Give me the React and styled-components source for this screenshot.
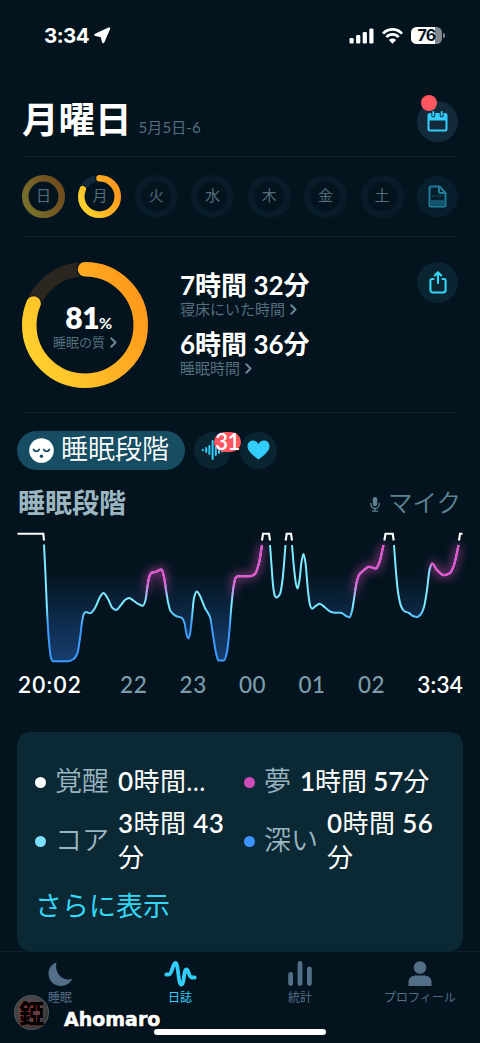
import React from 'react';
import styled, { createGlobalStyle } from 'styled-components'

const GlobalStyle = createGlobalStyle`
* { box-sizing: border-box; }
body {
margin: 0;
background: #03141e;
font-family: Lato, "Noto Sans CJK JP", sans-serif;
color: white;
}
`

const Screen = styled.div`
position: relative;
display: flex;
flex-direction: column;
width: 480px;
height: 1043px;
overflow: hidden;
background: #03141e;
`

const StatusBar = styled.div`
display: flex;
justify-content: space-between;
align-items: center;
height: 72px;
padding: 0 35px 0 44px;
`

const Clock = styled.div`
display: flex;
align-items: center;
gap: 5px;
font: 700 20.5px/24px Inter, sans-serif;
letter-spacing: -0.5px;
`

const StatusIcons = styled.div`
display: flex;
align-items: center;
gap: 8px;
height: 24px;
`

const Battery = styled.div`
display: flex;
align-items: center;
gap: 1px;
`

const BatteryBody = styled.div`
width: 31px;
height: 17px;
border-radius: 5.5px;
background: linear-gradient(90deg, white 78%, #81888d 78%);
color: #03141e;
font: 700 16px/17px Inter, sans-serif;
letter-spacing: -0.6px;
text-align: center;
`

const BatteryTip = styled.div`
width: 2px;
height: 5px;
border-radius: 0 2px 2px 0;
background: #81888d;
`

const Header = styled.header`
display: flex;
justify-content: space-between;
height: 84px;
margin: 0 22px;
padding-top: 29px;
`

const TitleGroup = styled.div`
display: flex;
align-items: baseline;
gap: 7px;
height: 41px;
`

const Title = styled.h1`
margin: 0;
font-size: 36.5px;
font-weight: 700;
line-height: 36px;
`

const DateText = styled.span`
color: #536d7d;
font-size: 15px;
font-weight: 400;
letter-spacing: 0.1px;
`

const RoundButton = styled.div`
position: relative;
display: flex;
align-items: center;
justify-content: center;
flex: none;
width: ${({size}) => size || 41}px;
height: ${({size}) => size || 41}px;
border-radius: 50%;
background: ${({bg}) => bg || '#0b2431'};
`

const RedDot = styled.div`
position: absolute;
top: -6px;
left: 4px;
width: 16px;
height: 16px;
border-radius: 50%;
background: #ff5660;
`

const Week = styled.div`
display: flex;
align-items: center;
justify-content: space-between;
height: 80px;
margin: 0 22px;
border-top: 1px solid #0c222d;
`

const Day = styled.div`
display: grid;
place-items: center;
width: 43px;
height: 43px;
color: #536d7d;
font-size: 15px;
line-height: 20px;
> * { grid-area: 1 / 1; }
span { margin-top: -2px; }
`

const Summary = styled.section`
display: flex;
height: 178px;
margin: 0 22px;
padding-top: 25px;
border-top: 1px solid #0c222d;
border-bottom: 1px solid #0c222d;
`

const Score = styled.div`
display: grid;
place-items: center;
width: 126px;
height: 126px;
> * { grid-area: 1 / 1; }
`

const ScoreText = styled.div`
display: flex;
flex-direction: column;
align-items: center;
padding-top: 8px;
`

const ScoreValue = styled.div`
padding-left: 7px;
font-size: 30px;
font-weight: 800;
line-height: 22px;
letter-spacing: -0.5px;
small { font-size: 16px; font-weight: 700; }
`

const Hint = styled.div`
display: flex;
align-items: center;
gap: 5px;
color: #536d7d;
font-size: ${({size}) => size || 15}px;
line-height: 17px;
`

const Times = styled.div`
display: flex;
flex-direction: column;
flex: 1;
padding: 7px 0 0 32px;
`

const TimeValue = styled.div`
font-size: 26px;
font-weight: 700;
line-height: 32px;
`

const TimeBlock = styled.div`
height: 59px;
`

const Chips = styled.div`
display: flex;
align-items: center;
gap: 9px;
height: 40px;
margin: 17px 17px 0;
`

const ActiveChip = styled.div`
display: flex;
align-items: center;
gap: 7px;
width: 168px;
height: 39px;
padding-left: 12px;
border-radius: 20px;
background: #164d62;
font-size: 27px;
font-weight: 350;
line-height: 36px;
white-space: nowrap;
span { margin-top: -3px; }
`

const CountBadge = styled.div`
position: absolute;
top: 0;
left: 20px;
width: 27px;
height: 20px;
border-radius: 11px;
background: #ff5660;
font-size: 22px;
font-weight: 600;
line-height: 19px;
text-align: center;
letter-spacing: -0.5px;
`

const ChartHead = styled.div`
display: flex;
justify-content: space-between;
align-items: center;
height: 40px;
margin: 13px 19px 0 18px;
`

const ChartTitle = styled.h2`
margin: 0;
color: #9bb5c1;
font-size: 27px;
font-weight: 600;
line-height: 36px;
`

const Mic = styled.div`
display: flex;
align-items: center;
gap: 8px;
color: #5f8291;
font-size: 24.5px;
font-weight: 350;
line-height: 36px;
svg { margin-top: 2px; }
`

const Plot = styled.svg`
display: block;
flex: none;
width: 480px;
height: 149px;
margin-top: -1px;
`

const Axis = styled.div`
display: flex;
justify-content: space-between;
height: 30px;
margin: -1px 17px 1px 18px;
color: #7c9cab;
font-size: 22.5px;
font-weight: 500;
letter-spacing: 0.6px;
line-height: 30px;
b { color: white; font-weight: 600; }
b:first-child { margin-right: 6px; letter-spacing: 1.2px; }
b:last-child { letter-spacing: 0.2px; }
`

const Card = styled.section`
flex: none;
height: 219px;
margin: 31px 17px 0;
padding: 30px 18px 0;
border-radius: 13px;
background: #0b2935;
`

const Stages = styled.div`
display: grid;
grid-template-columns: 209px 209px;
grid-template-rows: 37px 72px;
row-gap: 5px;
`

const Stage = styled.div`
display: flex;
align-items: center;
gap: 9px;
font-size: 26px;
line-height: 34px;
`

const Dot = styled.i`
flex: none;
width: 11px;
height: 11px;
margin-top: 3px;
border-radius: 50%;
background: ${({color}) => color};
`

const StageName = styled.span`
flex: none;
color: #9bb5c1;
font-size: 27px;
font-weight: 350;
`

const StageTime = styled.span`
letter-spacing: ${({tight}) => (tight ? '-0.1px' : '0.4px')};
white-space: pre;
b { font-weight: 600; }
`

const More = styled.a`
display: block;
margin-top: 12px;
color: #33d6f5;
font-size: 27px;
font-weight: 400;
line-height: 36px;
`

const TabBar = styled.nav`
display: grid;
grid-template-columns: repeat(4, 1fr);
height: 92px;
border-top: 1px solid #0c222d;
`

const Tab = styled.div`
display: flex;
flex-direction: column;
align-items: center;
padding-top: 8px;
color: ${({active}) => (active ? '#33cdfb' : '#536f88')};
font-size: 12px;
line-height: 20px;
svg { display: block; }
`

const Watermark = styled.div`
position: absolute;
left: 14px;
top: 994px;
display: flex;
align-items: center;
gap: 15px;
height: 36px;
font: 900 19px/24px "DejaVu Sans", sans-serif;
text-shadow: 1px 1px 2px black;
> span { margin-top: 14px; -webkit-text-stroke: 0.5px white; }
`

const Avatar = styled.div`
display: flex;
align-items: center;
justify-content: center;
width: 35px;
height: 35px;
border-radius: 50%;
border: 1px solid #5a5c5d;
background: radial-gradient(circle at 45% 45%, #7a2a30 0%, #4b4b4b 45%, #303030 75%, #777 100%);
color: black;
font: 900 25px/33px "Noto Sans CJK JP", sans-serif;
text-shadow: 0 0 1px #e0303c;
`

const HomeBar = styled.div`
position: absolute;
left: 154px;
bottom: 8px;
width: 172px;
height: 6px;
border-radius: 3px;
background: white;
`

const Ring = ({size, stroke, value, dim, track}) => {
const c = size / 2
const r = (size - stroke) / 2
const len = 2 * Math.PI * r
const angle = value * 2 * Math.PI
return (
<svg width={size} height={size}>
<defs>
<linearGradient id={'ring' + size + value} x1="0.2" y1="0" x2="0.7" y2="1">
<stop offset="0" stopColor={dim ? '#78702a' : '#ffd22e'} />
<stop offset="1" stopColor={dim ? '#704b1d' : '#ff991c'} />
</linearGradient>
</defs>
<circle cx={c} cy={c} r={r} fill="none" stroke={track} strokeWidth={stroke} />
{value > 0 && <>
<circle cx={c} cy={c - r} r={stroke / 2 + 1.3} fill="#03141e" />
<circle cx={c + r * Math.sin(angle)} cy={c - r * Math.cos(angle)} r={stroke / 2 + 1.3} fill="#03141e" />
<circle cx={c} cy={c} r={r} fill="none" stroke={`url(#ring${size}${value})`} strokeWidth={stroke}
strokeLinecap="round" strokeDasharray={`${len * value} ${len}`} transform={`rotate(-90 ${c} ${c})`} />
</>}
</svg>
)
}

const Chevron = () => (
<svg width="7" height="11" viewBox="0 0 7 11" fill="none" stroke="#6b8798" strokeWidth="2" strokeLinecap="round" strokeLinejoin="round">
<path d="M1.3 1.3 5.5 5.5 1.3 9.7" />
</svg>
)

// digits are set heavier than the units around them
const Duration = ({text, tight}) => (
<StageTime tight={tight}>{text.split(/(\d+)/).map((part, i) => i % 2 ? <b key={i}>{part}</b> : part)}</StageTime>
)

// sleep depth curve, one list of points per asleep stretch
const curves = [
[[44,544.5],[45.5,575],[47,610],[49,642],[51,658],[53,661.3],[68,661.3],[73,659.5],[77.5,653],[80,638],[82,622],[84,613.5],[86,612],[90,613.3],[95,608],[100,597],[103.5,593],[108,599],[112.5,608],[116,610],[121,605],[125,600],[129,598],[134,601],[138,603.8],[143,605.8],[145.5,600],[147.5,586],[149.5,576],[151.5,572.8],[156,571.8],[161.5,569.5],[164,577],[166,590],[168,602],[170.5,611],[176,616],[182,618],[184.5,623],[186.5,634],[188.3,638.5],[190,634],[192,617],[194,598],[196.7,591.5],[199.5,595],[205,608],[210,617],[213,635],[216,653],[218.5,660.5],[224,660.5],[227,652],[229.5,630],[231.5,605],[233.5,587],[235.5,578],[238,576.3],[250,576.3],[255,574],[259,563],[262,545]],
[[270,545],[271.5,565],[273,585],[274.5,595],[276.5,597.5],[280,594],[282.5,580],[285.5,545]],
[[292,545],[294,568],[296,584],[297.5,588.5],[299.5,580],[301.5,562],[303.5,554],[305.5,563],[308,591],[310,605],[312,608.7],[315,606.5],[319.7,603.7],[325,607.5],[330,611.5],[335,612.8],[341,612.8],[346,616],[349.5,617.5],[352,611],[354,599],[356.5,583],[359,575],[363,571],[369,566.8],[376,568.5],[379.5,562],[383.5,545]],
[[394,545],[396,572],[398,592],[401,606],[404,611],[409,613],[413,616],[417,617],[421,614],[424,607],[427,590],[429.5,570],[432,563.5],[437,570],[444,575.3],[450,573],[454,565],[456.5,555],[458.5,545]],
]

const smooth = (pts) => {
const n = pts.length
const s = []
for (let i = 0; i < n - 1; i++) s.push((pts[i + 1][1] - pts[i][1]) / (pts[i + 1][0] - pts[i][0]))
const m = pts.map((p, i) => {
if (i === 0) return s[0]
if (i === n - 1) return s[n - 2]
if (s[i - 1] * s[i] <= 0) return 0
return 2 * s[i - 1] * s[i] / (s[i - 1] + s[i])
})
let d = `M${pts[0][0]},${pts[0][1]}`
for (let i = 0; i < n - 1; i++) {
const [x0, y0] = pts[i]
const [x1, y1] = pts[i + 1]
const h = (x1 - x0) / 3
d += `C${x0 + h},${y0 + m[i] * h} ${x1 - h},${y1 - m[i + 1] * h} ${x1},${y1}`
}
return d
}

const SleepChart = () => (
<Plot viewBox="0 522 480 149">
<defs>
<linearGradient id="line" gradientUnits="userSpaceOnUse" x1="0" y1="606" x2="0" y2="626">
<stop offset="0" stopColor="#7cebff" />
<stop offset="1" stopColor="#3d9bff" />
</linearGradient>
<linearGradient id="dream" gradientUnits="userSpaceOnUse" x1="0" y1="580" x2="0" y2="602">
<stop offset="0" stopColor="#f050ce" />
<stop offset="1" stopColor="#f050ce" stopOpacity="0" />
</linearGradient>
<linearGradient id="deep" gradientUnits="userSpaceOnUse" x1="0" y1="572" x2="0" y2="662">
<stop offset="0" stopColor="#1a4680" stopOpacity="0" />
<stop offset="1" stopColor="#1a4680" stopOpacity="0.85" />
</linearGradient>
<filter id="glow" filterUnits="userSpaceOnUse" x="130" y="520" width="350" height="110">
<feGaussianBlur stdDeviation="5" />
</filter>
<clipPath id="dreamTime">
<rect x="144" y="540" width="23.5" height="80" />
<rect x="228" y="540" width="36" height="80" />
<rect x="352" y="540" width="34" height="80" />
<rect x="430.5" y="540" width="30" height="40" />
</clipPath>
</defs>
{curves.map((pts, i) => <path key={i} d={smooth(pts) + 'Z'} fill="url(#deep)" />)}
<g filter="url(#glow)" opacity="0.55">
<g clipPath="url(#dreamTime)" fill="none" stroke="url(#dream)" strokeWidth="6">
{curves.map((pts, i) => <path key={i} d={smooth(pts)} />)}
</g>
</g>
<g fill="none" stroke="url(#line)" strokeWidth="2">
{curves.map((pts, i) => <path key={i} d={smooth(pts)} />)}
</g>
<g clipPath="url(#dreamTime)" fill="none" stroke="url(#dream)" strokeWidth="2.1">
{curves.map((pts, i) => <path key={i} d={smooth(pts)} />)}
</g>
<path d="M17.5 533.8H43.3L44 540.5M262 540.5 263 533.8H269L270 540.5M285.7 540.5 286.7 533.8H291L292 540.5M384.3 540.5 385.5 533.8H392.7L393.7 540.5M459 540.5 460 533.8H462.5" fill="none" stroke="white" strokeWidth="2.1" />
</Plot>
)

const days = [
['日', 0.975], ['月', 0.81], ['火', 0], ['水', 0], ['木', 0], ['金', 0], ['土', 0],
]

const App = () => {

    return(
<Screen>
<GlobalStyle />
<StatusBar>
<Clock>3:34
<svg width="17" height="17" viewBox="0 0 17 17"><path d="M1.5 7.800 15 1.500 9.200 15 7.700 9.200Z" fill="white" stroke="white" strokeWidth="2.400" strokeLinejoin="round" /></svg>
</Clock>
<StatusIcons>
<svg width="25" height="16" viewBox="-0.5 0 25 16" fill="white">
<rect x="0" y="10" width="4.200" height="5.600" rx="1.300" /><rect x="6.600" y="7" width="4.200" height="8.600" rx="1.300" /><rect x="13.200" y="4" width="4.200" height="11.600" rx="1.300" /><rect x="19.800" y="0.500" width="4.200" height="15.100" rx="1.300" />
</svg>
<svg width="21" height="16" viewBox="0 0 21 16" fill="none" stroke="white" strokeWidth="2.700">
<path d="M1 5.600C6-.1 15-.1 20 5.600M4.400 9.200c3.300-3.700 8.900-3.700 12.200 0" /><path d="M6.900 11.900c2-2 5.200-2 7.200 0L10.500 15.700Z" fill="white" stroke="none" />
</svg>
<Battery><BatteryBody>76</BatteryBody><BatteryTip /></Battery>
</StatusIcons>
</StatusBar>

<Header>
<TitleGroup><Title>月曜日</Title><DateText>5月5日-6</DateText></TitleGroup>
<RoundButton bg="#122a3a">
<svg width="21" height="21" viewBox="0 0 21 21"><rect x="1.500" y="3" width="18" height="16.500" rx="1.500" fill="none" stroke="#33cdfb" strokeWidth="2" /><path d="M1 3H20V9.500H1Z" fill="#33cdfb" /><path d="M6.300 1V4.500M14.700 1V4.500" stroke="#122a3a" strokeWidth="4" strokeLinecap="round" /><path d="M6.300 1V4.500M14.700 1V4.500" stroke="#33cdfb" strokeWidth="2" strokeLinecap="round" /></svg>
<RedDot />
</RoundButton>
</Header>

<Week>
{days.map(([name, value]) => (
<Day key={name}>
<Ring size={43} stroke={6.5} value={value} dim={name === '日'} track={value ? '#11293a' : '#081c28'} />
<span>{name}</span>
</Day>
))}
<RoundButton bg="#071f2c">
<svg width="19" height="23" viewBox="0 0 19 23" fill="none" stroke="#217c99" strokeWidth="2" strokeLinejoin="round"><path d="M3 15H16V20H3Z" fill="#14556b" stroke="none" /><path d="M3 1.500H11.500L17.500 8V20a1.500 1.500 0 0 1-1.500 1.500H3A1.500 1.500 0 0 1 1.500 20V3A1.500 1.500 0 0 1 3 1.500Z" /><path d="M11 2V6.500A1.500 1.500 0 0 0 12.500 8H17" /><path d="M4 11H15" strokeWidth="0.700" strokeDasharray="1.500 1" /></svg>
</RoundButton>
</Week>

<Summary>
<Score>
<Ring size={126} stroke={14.5} value={0.812} track="#2b261f" />
<ScoreText>
<ScoreValue>81<small>%</small></ScoreValue>
<Hint size={13}>睡眠の質 <Chevron /></Hint>
</ScoreText>
</Score>
<Times>
<TimeBlock><TimeValue>7時間 32分</TimeValue><Hint>寝床にいた時間 <Chevron /></Hint></TimeBlock>
<TimeBlock><TimeValue>6時間 36分</TimeValue><Hint>睡眠時間 <Chevron /></Hint></TimeBlock>
</Times>
<RoundButton>
<svg width="18" height="23" viewBox="0 0 18 23" fill="none" stroke="#33d6f5" strokeWidth="2.100" strokeLinecap="round" strokeLinejoin="round"><path d="M4.500 8H3A1.600 1.600 0 0 0 1.400 9.600V19A2.500 2.500 0 0 0 3.900 21.500H14.100A2.500 2.500 0 0 0 16.600 19V9.600A1.600 1.600 0 0 0 15 8H13.500M9 12V1.500M5.800 4.500 9 1.300 12.200 4.500" /></svg>
</RoundButton>
</Summary>

<Chips>
<ActiveChip>
<svg width="25" height="25" viewBox="0 0 25 25" fill="none"><circle cx="12.500" cy="12.500" r="12.300" fill="white" /><path d="M4.500 11.500C5.800 14 9 14 10.300 11.500M14.700 11.500C16 14 19.200 14 20.500 11.500" stroke="#164d62" strokeWidth="1.700" strokeLinecap="round" /><circle cx="12.500" cy="18.300" r="1.700" fill="#164d62" /></svg>
<span>睡眠段階</span>
</ActiveChip>
<RoundButton size={37}>
<svg width="23" height="20" viewBox="0 0 23 20" stroke="#33cdfb" strokeWidth="2" strokeLinecap="round"><path d="M1.800 9.700V10.300M5.200 8V12M8.400 6V14M11.600 1V19M14.800 5V15M18 7V13M21.200 8.500V11.500" /></svg>
<CountBadge>31</CountBadge>
</RoundButton>
<RoundButton size={37}>
<svg width="23" height="20" viewBox="0 0 23 20"><path d="M11.500 19.500C4 14 .5 10 .5 6.200.5 3 3 .6 6 .6c2.400 0 4.500 1.300 5.500 3.500C12.500 1.900 14.600.6 17 .6c3 0 5.500 2.400 5.500 5.600 0 3.800-3.500 7.800-11 13.300Z" fill="#33cdfb" /></svg>
</RoundButton>
</Chips>

<ChartHead>
<ChartTitle>睡眠段階</ChartTitle>
<Mic>
<svg width="10" height="15" viewBox="0 0 10 15" fill="none" stroke="#5f8291" strokeWidth="1.300" strokeLinecap="round"><rect x="2.800" y="0" width="4.400" height="9.300" rx="2.200" fill="#5f8291" stroke="none" /><path d="M.8 6.500V7.200a4.200 4.200 0 0 0 8.400 0V6.500M5 11.500V14M2.500 14.200H7.500" /></svg>
マイク
</Mic>
</ChartHead>
<SleepChart />
<Axis><b>20:02</b><span>22</span><span>23</span><span>00</span><span>01</span><span>02</span><b>3:34</b></Axis>

<Card>
<Stages>
<Stage><Dot color="white" /><StageName>覚醒</StageName><Duration text="0時間..." /></Stage>
<Stage><Dot color="#cb4bb8" /><StageName>夢</StageName><Duration tight="true" text="1時間 57分" /></Stage>
<Stage><Dot color="#7ce0ff" /><StageName>コア</StageName><Duration text={'3時間 43\n分'} /></Stage>
<Stage><Dot color="#3d93ff" /><StageName>深い</StageName><Duration text={'0時間 56\n分'} /></Stage>
</Stages>
<More>さらに表示</More>
</Card>

<TabBar>
<Tab>
<svg width="25" height="28" viewBox="0 0 25 28"><path d="M8.500 2.500C3.500 4.200.5 8.500.5 13.500.5 20.500 6 26 13 26c5 0 9.300-2.700 11.200-7.200-2 .7-3.500.9-5.200.7C11.500 18.500 6.500 10.500 8.500 2.500Z" fill="currentColor" /></svg>
睡眠
</Tab>
<Tab active="true">
<svg width="33" height="28" viewBox="0 0 33 28" fill="none" stroke="currentColor" strokeWidth="3.800" strokeLinecap="round" strokeLinejoin="round"><path d="M2.300 14.500H4.500C8.500 14.500 8.500 3 11.500 3S14 24.500 17.300 24.500C20.500 24.500 19.500 9.500 22.300 9.500C25 9.500 24.500 17.500 28 17.500H30.700" /></svg>
日誌
</Tab>
<Tab>
<svg width="24" height="28" viewBox="0 0 24 28" stroke="currentColor" strokeWidth="4.800" strokeLinecap="round"><path d="M2.600 14.500V23.500M12 3.500V23.500M21.400 9V23.500" /></svg>
統計
</Tab>
<Tab>
<svg width="24" height="28" viewBox="0 0 24 28" fill="currentColor"><circle cx="12" cy="7.500" r="6.300" /><path d="M.5 26V22.500C.5 17.500 4 15.500 8 15.500H16C20 15.500 23.500 17.500 23.500 22.500V26Z" /></svg>
プロフィール
</Tab>
</TabBar>
<Watermark><Avatar>錏</Avatar><span>Ahomaro</span></Watermark>
<HomeBar />
</Screen>
    )
}

export default App
